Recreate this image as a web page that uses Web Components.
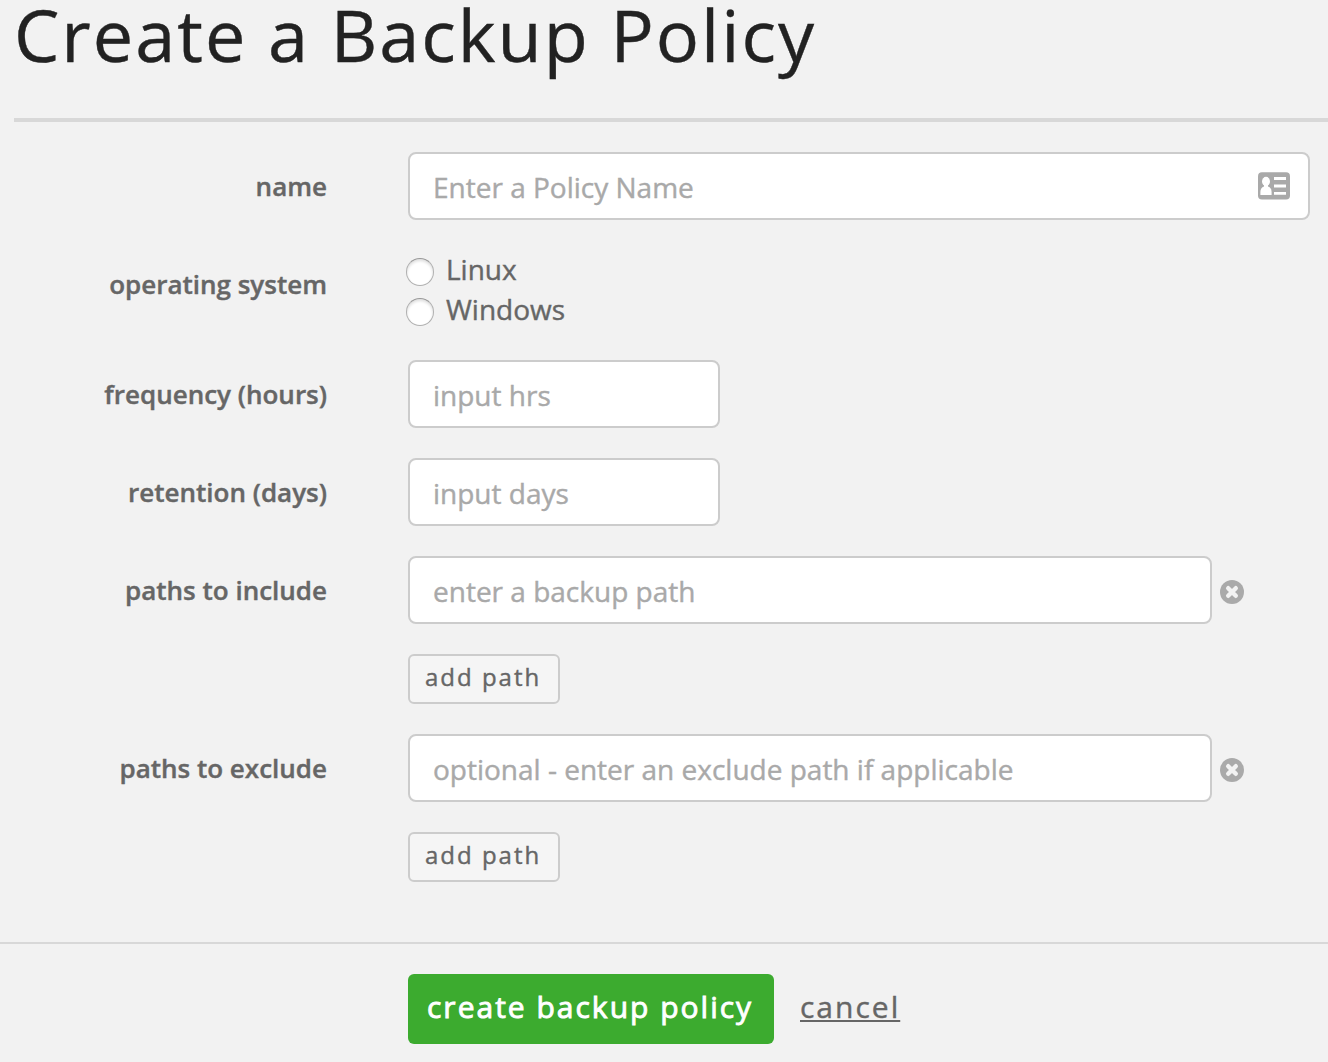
<!DOCTYPE html>
<html lang="en"><head><meta charset="utf-8"><title>Create a Backup Policy</title>
<style>
html,body{margin:0;height:1062px;overflow:hidden;background:#f2f2f2;font-family:"Open Sans",sans-serif;color:#666;-webkit-text-stroke:.4px currentColor}
</style></head><body>
<policy-page></policy-page>
<script>
const define=(name,css,html,setup)=>customElements.define(name,class extends HTMLElement{
  constructor(){super();this.attachShadow({mode:'open'});}
  connectedCallback(){this.shadowRoot.innerHTML=`<style>*{box-sizing:border-box}${css}</style>${html}`;if(setup)setup(this,this.shadowRoot);}
});
define('page-title',`:host{display:flow-root;box-sizing:border-box;height:122px;margin-left:14px;border-bottom:4px solid #d8d8d8}
h1{margin:0;font-size:72px;line-height:68px;font-weight:400;letter-spacing:2px;color:#222;white-space:nowrap}`,`<h1><slot></slot></h1>`);
define('form-row',`:host{display:flex;align-items:flex-start}
.label{width:327px;margin-right:81px;flex:none;text-align:right;font-size:26px;line-height:36px;font-weight:600;white-space:nowrap;padding-top:16px}
.body{display:flex;flex-direction:column;align-items:flex-start;gap:30px}`,
`<div class="label"></div><div class="body"><slot></slot></div>`,(h,r)=>{r.querySelector('.label').textContent=h.getAttribute('label')});
define('text-field',`:host{display:flex;align-items:center;height:68px}
.box{display:flex;align-items:center;height:68px;background:#fff;border:2px solid #ccc;border-radius:8px;padding:2px 18px 0 23px;justify-content:space-between;font-size:28px;color:#a9a9a9;white-space:nowrap}`,
`<div class="box"><span></span><slot name="inside"></slot></div><slot></slot>`,(h,r)=>{r.querySelector('span').textContent=h.getAttribute('placeholder');r.querySelector('.box').style.width=h.getAttribute('width')+'px'});
define('radio-option',`:host{display:flex;height:40px;align-items:center;gap:12px;font-size:28px;margin-left:-2px}
i{width:28px;height:28px;border-radius:50%;background:#fff;border:1px solid #b0b0b0;border-top-color:#989898;box-shadow:inset 0 2px 3px #0002;margin-top:4px}span{padding-bottom:2px}`,`<i></i><span><slot></slot></span>`);
define('radio-list',`:host{display:block;height:80px}`,`<slot></slot>`);
define('remove-icon',`:host{display:block;margin:4px 0 0 8px}svg{display:block}`,
`<svg width="24" height="24" viewBox="0 0 24 24"><circle cx="12" cy="12" r="12" fill="#aaa"/><path d="M8.2 8.2l7.6 7.6M15.8 8.2l-7.6 7.6" stroke="#f3f3f3" stroke-width="4.4" stroke-linecap="round"/></svg>`);
define('card-icon',`:host{display:block;margin-top:-2px}svg{display:block}`,
`<svg width="32" height="28" viewBox="0 0 32 28"><rect y=".3" width="32" height="27.2" rx="4" fill="#a9a9a9"/><ellipse cx="8" cy="9.4" rx="4" ry="4.6" fill="#fff"/><path d="M6 12h4v2.4q3.6 1.2 3.6 5.6v3H2.4v-3q0-4.4 3.6-5.6z" fill="#fff"/><path d="M16 6.5h12M16 14h12M16 21.3h12" stroke="#fff" stroke-width="2.8"/></svg>`);
define('small-button',`:host{display:block;box-sizing:border-box;width:152px;height:50px;border:2px solid #ccc;border-radius:6px;background:#f5f5f5;font-size:24px;line-height:41px;letter-spacing:2px;padding-left:15px;white-space:nowrap}`,`<slot></slot>`);
define('action-bar',`:host{display:flex;box-sizing:border-box;border-top:2px solid #d8d8d8;padding:30px 0 0 408px;height:120px;margin-top:60px}
.go{width:366px;height:70px;border-radius:6px;background:#3cab2f;color:#fff;font-size:30px;line-height:66px;letter-spacing:2px;padding-left:19px;-webkit-text-stroke:.9px #fff;white-space:nowrap}
.no{margin-left:26px;font-size:30px;line-height:66px;letter-spacing:2px;text-decoration:underline;text-decoration-thickness:2px;text-underline-offset:2px;text-decoration-skip-ink:none}`,
`<div class="go">create backup policy</div><div class="no">cancel</div>`);
define('policy-page',`:host{display:block}.form{display:flex;flex-direction:column;gap:30px;margin-top:30px}`,
`<page-title>Create a Backup Policy</page-title><div class="form">
<form-row label="name"><text-field width="902" placeholder="Enter a Policy Name"><card-icon slot="inside"></card-icon></text-field></form-row>
<form-row label="operating system"><radio-list><radio-option>Linux</radio-option><radio-option>Windows</radio-option></radio-list></form-row>
<form-row label="frequency (hours)"><text-field width="312" placeholder="input hrs"></text-field></form-row>
<form-row label="retention (days)"><text-field width="312" placeholder="input days"></text-field></form-row>
<form-row label="paths to include"><text-field width="804" placeholder="enter a backup path"><remove-icon></remove-icon></text-field><small-button>add path</small-button></form-row>
<form-row label="paths to exclude"><text-field width="804" placeholder="optional - enter an exclude path if applicable"><remove-icon></remove-icon></text-field><small-button>add path</small-button></form-row>
</div><action-bar></action-bar>`);
</script></body></html>
